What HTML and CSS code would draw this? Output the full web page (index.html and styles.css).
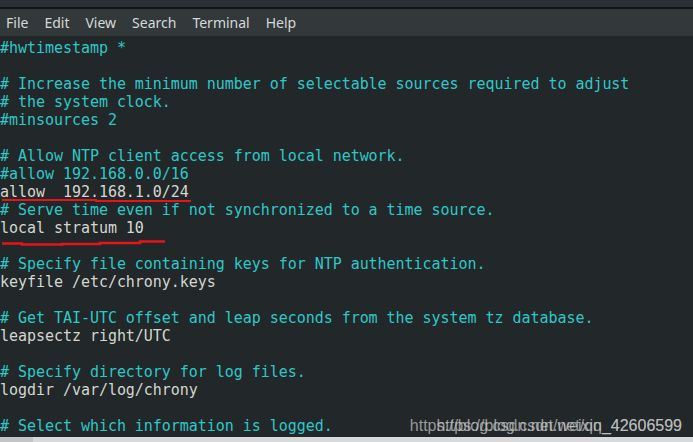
FILE: index.html
```html
<!DOCTYPE html>
<html>
<head>
<meta charset="utf-8">
<link rel="stylesheet" href="styles.css">
</head>
<body>
<div class="window">
  <div class="titlebar"></div>
  <div class="menubar">
    <span class="menu">File</span>
    <span class="menu">Edit</span>
    <span class="menu">View</span>
    <span class="menu">Search</span>
    <span class="menu">Terminal</span>
    <span class="menu">Help</span>
  </div>
  <div class="terminal">
<pre class="code"><span class="c">#hwtimestamp *</span>

<span class="c"># Increase the minimum number of selectable sources required to adjust</span>
<span class="c"># the system clock.</span>
<span class="c">#minsources 2</span>

<span class="c"># Allow NTP client access from local network.</span>
<span class="c">#allow 192.168.0.0/16</span>
allow  192.168.1.0/24
<span class="c"># Serve time even if not synchronized to a time source.</span>
local stratum 10

<span class="c"># Specify file containing keys for NTP authentication.</span>
keyfile /etc/chrony.keys

<span class="c"># Get TAI-UTC offset and leap seconds from the system tz database.</span>
leapsectz right/UTC

<span class="c"># Specify directory for log files.</span>
logdir /var/log/chrony

<span class="c"># Select which information is logged.</span></pre>
    <svg class="marks" width="693" height="442" viewBox="0 0 693 442">
      <polyline points="2,200 96,200 96,201 191,201" fill="none" stroke="#e8141c" stroke-width="2"/>
      <polyline points="2,243.5 22,243.5 22,244.5 62,244.5 62,244 100,244 100,243 140,243 140,241.5 165,241.5" fill="none" stroke="#e8141c" stroke-width="2.5"/>
    </svg>
    <div class="watermark">
      <span class="wm wm1">https://blog.csdn.net/weixin_42606599</span>
      <span class="wm wm2">https://blog.csdn.net/qq_42606599</span>
    </div>
  </div>
  <div class="bottombar"><span class="bottomleft"></span></div>
</div>
</body>
</html>
```
FILE: styles.css
```css
html, body {
  margin: 0;
  padding: 0;
  background: #22272a;
}
.window {
  width: 693px;
  height: 442px;
  display: flex;
  flex-direction: column;
  overflow: hidden;
  position: relative;
}
.titlebar {
  height: 7px;
  background: #2b3034;
  border-bottom: 2px solid #111314;
  flex: none;
}
.menubar {
  height: 27px;
  background: #33393b;
  display: flex;
  align-items: center;
  padding-left: 6px;
  gap: 16px;
  flex: none;
  font-family: "Noto Sans", "DejaVu Sans", sans-serif;
  font-size: 14px;
  color: #d5d8d8;
}
.terminal {
  flex: 1;
  background: #22272a;
  position: relative;
  overflow: hidden;
}
.code {
  margin: 0;
  padding: 3px 0 0 0;
  font-family: "DejaVu Sans Mono", monospace;
  font-size: 15px;
  line-height: 18px;
  letter-spacing: -0.04px;
  color: #d3d7cf;
}
.c {
  color: #2fc8c8;
}
.marks {
  position: absolute;
  left: 0;
  top: -36px;
}
.watermark {
  position: absolute;
  right: 11px;
  bottom: 2px;
  height: 18px;
  width: 300px;
}
.wm {
  position: absolute;
  right: 0;
  top: 0;
  font-family: "Liberation Sans", Arial, sans-serif;
  font-size: 16px;
  color: rgba(200, 200, 200, 0.72);
  white-space: nowrap;
}
.bottombar {
  height: 5px;
  background: #d9d9d9;
  flex: none;
  display: flex;
}
.bottomleft {
  width: 33px;
  background: #c4c4c4;
}
```
